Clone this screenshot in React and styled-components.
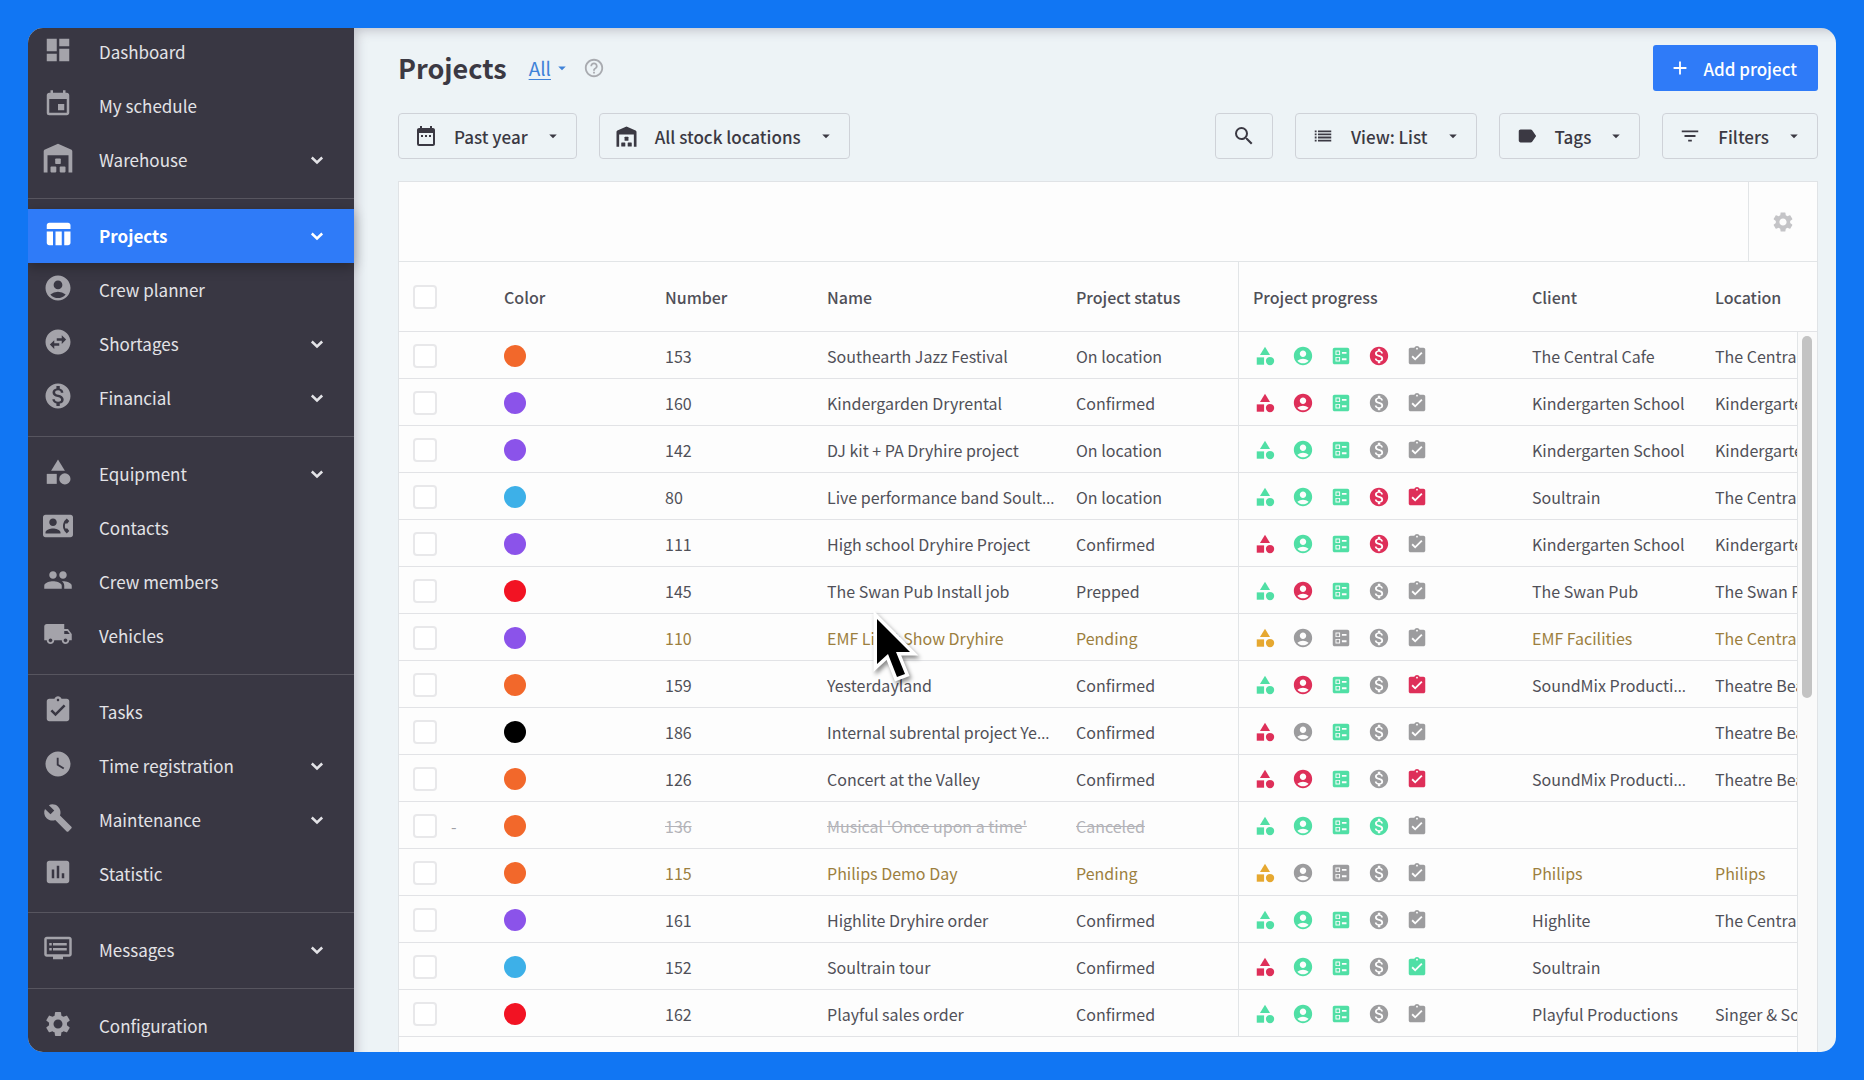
import React from 'react'
import styled, { createGlobalStyle } from 'styled-components'
import {
  MdAccountCircle,
  MdAdd,
  MdArrowDropDown,
  MdAssessment,
  MdAssignmentTurnedIn,
  MdBallot,
  MdBuild,
  MdCategory,
  MdContactPhone,
  MdDashboard,
  MdDateRange,
  MdDvr,
  MdEvent,
  MdFilterList,
  MdHelpOutline,
  MdLabel,
  MdLocalShipping,
  MdMonetizationOn,
  MdPeople,
  MdSearch,
  MdSettings,
  MdSwapHorizontalCircle,
  MdTableChart,
  MdWatchLater
} from 'react-icons/md'

const GlobalStyle = createGlobalStyle`
  * {
    box-sizing: border-box;
  }
  body {
    margin: 0;
    background: #1176f3;
    color: #505058;
    font-family: 'Noto Sans CJK SC', 'Open Sans', sans-serif;
    font-size: 16px;
    line-height: 24px;
  }
  button {
    font-family: inherit;
    cursor: pointer;
  }
`

const Page = styled.div`
  position: relative;
  height: 100vh;
  padding: 28px;
`

const Window = styled.div`
  display: flex;
  height: 100%;
  overflow: hidden;
  border-radius: 15px;
  background: #edf3f6;
`

const Sidebar = styled.nav`
  flex: 0 0 326px;
  background: #393743;
`

const NavGroup = styled.ul`
  list-style: none;
  margin: 0;
  padding: 0 0 11px;
  &:first-child {
    margin-top: -3px;
  }
  & + & {
    border-top: 1px solid #57555f;
    padding-top: 10px;
  }
`

const NavLink = styled.a`
  display: flex;
  align-items: center;
  height: 54px;
  padding: 0 25px 0 15px;
  text-decoration: none;
  font-size: 17px;
  font-weight: ${props => (props.$active ? 700 : 400)};
  color: ${props => (props.$active ? '#fff' : '#e3e3e7')};
  background: ${props => (props.$active ? '#2f7bf8' : 'none')};
  box-shadow: ${props => (props.$active ? '0 4px 12px rgba(0, 0, 0, 0.3)' : 'none')};
  > svg:first-child {
    width: 30px;
    height: 30px;
    margin: 0 26px 5px 0;
    color: ${props => (props.$active ? '#fff' : '#a4a3aa')};
  }
`

const NavLabel = styled.span`
  flex: 1;
`

const Main = styled.main`
  flex: 1;
  min-width: 0;
  display: flex;
  flex-direction: column;
  padding: 17px 18px 0 44px;
  box-shadow: inset 10px 10px 12px -8px rgba(90, 80, 100, 0.32);
`

const Bar = styled.div`
  display: flex;
  align-items: center;
  gap: 22px;
  margin-bottom: 22px;
`

const Title = styled.h1`
  margin: 0;
  font-size: 27px;
  line-height: 46px;
  font-weight: 700;
  color: #3b3943;
`

const Scope = styled.div`
  display: flex;
  align-items: center;
  gap: 12px;
`

const ScopeLink = styled.a`
  display: flex;
  align-items: center;
  gap: 2px;
  font-size: 19px;
  color: #3f82d8;
  text-decoration: none;
  span {
    text-decoration: underline;
    text-underline-offset: 3px;
  }
`

const HelpButton = styled.button`
  display: flex;
  padding: 0;
  border: 0;
  background: none;
  color: #a9abb0;
`

const Spacer = styled.div`
  flex: 1;
`

const AddButton = styled.button`
  display: flex;
  align-items: center;
  gap: 12px;
  height: 46px;
  padding: 0 21px 0 16px;
  border: 0;
  border-radius: 3px;
  background: #2f7bf8;
  color: #fff;
  font-size: 17px;
  font-weight: 500;
`

const ToolButton = styled.button`
  display: flex;
  align-items: center;
  gap: 16px;
  height: 46px;
  padding: 0 14px 0 15px;
  border: 1px solid #cfd2d8;
  border-radius: 4px;
  background: none;
  color: #3b3943;
  font-size: 17px;
  font-weight: 500;
`

const SearchButton = styled(ToolButton)`
  padding: 0 16px;
`

const ToolIcon = styled.span`
  display: flex;
  justify-content: center;
  width: 24px;
`

const Panel = styled.section`
  position: relative;
  flex: 1;
  min-height: 0;
  overflow: hidden;
  border: 1px solid #e0e3e6;
  border-bottom: 0;
  background: #fdfdfd;
`

const PanelTools = styled.div`
  display: flex;
  justify-content: flex-end;
  height: 80px;
  border-bottom: 1px solid #e2e5e7;
`

const SettingsButton = styled.button`
  width: 69px;
  display: grid;
  place-items: center;
  padding: 0;
  border: 0;
  border-left: 1px solid #e2e5e7;
  background: none;
  color: #c4c4c7;
`

const Table = styled.table`
  width: 100%;
  table-layout: fixed;
  border-collapse: separate;
  border-spacing: 0;
  text-align: left;
`

const Th = styled.th`
  width: ${props => props.$width || 'auto'};
  height: 70px;
  padding: 0 4px 0 14px;
  border-bottom: 1px solid #e2e3e6;
  border-left: ${props => (props.$split ? '1px solid #e2e5e7' : '0')};
  font-weight: 500;
  white-space: nowrap;
`

const tones = {
  pending: '#9c7f3e',
  canceled: '#b3b3b8'
}

const Td = styled.td`
  height: 47px;
  padding: 2px 4px 0 14px;
  border-bottom: 1px solid #e2e3e6;
  border-left: ${props => (props.$split ? '1px solid #e2e5e7' : '0')};
  overflow: hidden;
  white-space: nowrap;
  color: ${props => tones[props.$tone] || 'inherit'};
  text-decoration: ${props => (props.$tone === 'canceled' ? 'line-through' : 'none')};
`

// the CJK font centres its ellipsis, so take the glyph from another family
const Ellipsis = styled.span`
  font-family: 'Open Sans', sans-serif;
`

const CheckWrap = styled.div`
  display: flex;
  align-items: center;
  gap: 14px;
  color: #a0a0a6;
`

const Checkbox = styled.input`
  appearance: none;
  width: 24px;
  height: 24px;
  margin: 0;
  border: 2px solid #e8e8ea;
  border-radius: 4px;
  background: #fff;
`

const Dot = styled.span`
  display: block;
  width: 22px;
  height: 22px;
  border-radius: 50%;
  background: ${props => props.$color};
`

const Progress = styled.div`
  display: flex;
  gap: 16px;
  padding-left: 1px;
`

const marks = {
  g: '#50dfa5',
  r: '#de2f59',
  n: '#9c9c9e',
  y: '#e6a830'
}

const Mark = styled.span`
  display: flex;
  color: ${props => marks[props.$state]};
`

const ScrollTrack = styled.div`
  position: absolute;
  top: 150px;
  right: 0;
  bottom: 0;
  width: 20px;
  padding: 4px 5px 0 4px;
  border-left: 1px solid #e2e5e7;
  background: #fafafa;
`

const ScrollThumb = styled.div`
  width: 10px;
  height: 362px;
  border-radius: 5px;
  background: #c3c3c3;
`

const Pointer = styled.svg`
  position: absolute;
  left: 868px;
  top: 608px;
  filter: drop-shadow(2px 3px 2px rgba(0, 0, 0, 0.45));
`

const Chevron = () => (
  <svg width="24" height="24" viewBox="0 0 24 24" fill="none" stroke="currentColor" strokeWidth="2.5">
    <path d="M6.800 9.500 12 14.500l5.200-5" />
  </svg>
)

const WarehouseIcon = ({ size = 24 }) => (
  <svg width={size} height={size} viewBox="0 0 30 30" fill="currentColor">
    <path d="M15 .8 28 6.6c.8.4 1.3 1 1.3 1.9v21h-3.8V12.2H4.5v17.3H.7v-21c0-.9.5-1.5 1.3-1.9z" />
    <rect x="12.2" y="15.4" width="5.6" height="5.6" rx="0.8" />
    <rect x="7.5" y="23.6" width="5.8" height="5.8" rx="0.8" />
    <rect x="16.7" y="23.6" width="5.8" height="5.8" rx="0.8" />
  </svg>
)

const ListIcon = ({ size = 24 }) => (
  <svg width={size} height={size} viewBox="0 0 24 24" fill="currentColor">
    <path d="M3 6h2v2H3zM3 9.3h2v2H3zM3 12.6h2v2H3zM3 16h2v2H3zM6.5 6H21v2H6.5zM6.5 9.3H21v2H6.5zM6.5 12.6H21v2H6.5zM6.5 16H21v2H6.5z" />
  </svg>
)

const nav = [
  [
    { label: 'Dashboard', icon: MdDashboard },
    { label: 'My schedule', icon: MdEvent },
    { label: 'Warehouse', icon: WarehouseIcon, more: true }
  ],
  [
    { label: 'Projects', icon: MdTableChart, more: true, active: true },
    { label: 'Crew planner', icon: MdAccountCircle },
    { label: 'Shortages', icon: MdSwapHorizontalCircle, more: true },
    { label: 'Financial', icon: MdMonetizationOn, more: true }
  ],
  [
    { label: 'Equipment', icon: MdCategory, more: true },
    { label: 'Contacts', icon: MdContactPhone },
    { label: 'Crew members', icon: MdPeople },
    { label: 'Vehicles', icon: MdLocalShipping }
  ],
  [
    { label: 'Tasks', icon: MdAssignmentTurnedIn },
    { label: 'Time registration', icon: MdWatchLater, more: true },
    { label: 'Maintenance', icon: MdBuild, more: true },
    { label: 'Statistic', icon: MdAssessment }
  ],
  [{ label: 'Messages', icon: MdDvr, more: true }],
  [{ label: 'Configuration', icon: MdSettings }]
]

const progressIcons = [
  MdCategory,
  MdAccountCircle,
  MdBallot,
  MdMonetizationOn,
  MdAssignmentTurnedIn
]

const orange = '#f2682b'
const purple = '#8b53ea'
const sky = '#3db0e8'
const red = '#f21323'

// color, number, name, status, progress, client, location, tone
const rows = [
  [orange, 153, 'Southearth Jazz Festival', 'On location', 'gggrn', 'The Central Cafe', 'The Central'],
  [purple, 160, 'Kindergarden Dryrental', 'Confirmed', 'rrgnn', 'Kindergarten School', 'Kindergarten'],
  [purple, 142, 'DJ kit + PA Dryhire project', 'On location', 'gggnn', 'Kindergarten School', 'Kindergarten'],
  [sky, 80, 'Live performance band Soult…', 'On location', 'gggrr', 'Soultrain', 'The Central'],
  [purple, 111, 'High school Dryhire Project', 'Confirmed', 'rggrn', 'Kindergarten School', 'Kindergarten'],
  [red, 145, 'The Swan Pub Install job', 'Prepped', 'grgnn', 'The Swan Pub', 'The Swan P'],
  [purple, 110, 'EMF Light Show Dryhire', 'Pending', 'ynnnn', 'EMF Facilities', 'The Central', 'pending'],
  [orange, 159, 'Yesterdayland', 'Confirmed', 'grgnr', 'SoundMix Producti…', 'Theatre Bea'],
  ['#000', 186, 'Internal subrental project Ye…', 'Confirmed', 'rngnn', '', 'Theatre Bea'],
  [orange, 126, 'Concert at the Valley', 'Confirmed', 'rrgnr', 'SoundMix Producti…', 'Theatre Bea'],
  [orange, 136, "Musical 'Once upon a time'", 'Canceled', 'ggggn', '', '', 'canceled'],
  [orange, 115, 'Philips Demo Day', 'Pending', 'ynnnn', 'Philips', 'Philips', 'pending'],
  [purple, 161, 'Highlite Dryhire order', 'Confirmed', 'gggnn', 'Highlite', 'The Central'],
  [sky, 152, 'Soultrain tour', 'Confirmed', 'rggng', 'Soultrain', ''],
  [red, 162, 'Playful sales order', 'Confirmed', 'gggnn', 'Playful Productions', 'Singer & So']
]

const Tool = ({ icon: Icon, size = 24, children }) => (
  <ToolButton type="button">
    <ToolIcon>
      <Icon size={size} />
    </ToolIcon>
    <span>{children}</span>
    <MdArrowDropDown size={18} />
  </ToolButton>
)

const Text = ({ value }) =>
  value.endsWith('…') ? (
    <>
      {value.slice(0, -1)}
      <Ellipsis>…</Ellipsis>
    </>
  ) : (
    value
  )

const ProjectRow = ({ row }) => {
  const [color, number, name, status, progress, client, location, tone] = row
  return (
    <tr>
      <Td>
        <CheckWrap>
          <Checkbox type="checkbox" aria-label={`Select ${name}`} />
          {tone === 'canceled' && <span>-</span>}
        </CheckWrap>
      </Td>
      <Td>
        <Dot $color={color} />
      </Td>
      <Td $tone={tone}>{number}</Td>
      <Td $tone={tone}>
        <Text value={name} />
      </Td>
      <Td $tone={tone}>{status}</Td>
      <Td $split>
        <Progress>
          {progressIcons.map((Icon, i) => (
            <Mark key={i} $state={progress[i]}>
              <Icon size={22} />
            </Mark>
          ))}
        </Progress>
      </Td>
      <Td $tone={tone}>
        <Text value={client} />
      </Td>
      <Td $tone={tone}>{location}</Td>
    </tr>
  )
}

const App = () => (
  <Page>
    <GlobalStyle />
    <Window>
      <Sidebar>
        {nav.map((group, i) => (
          <NavGroup key={i}>
            {group.map(({ label, icon: Icon, more, active }) => (
              <li key={label}>
                <NavLink href="#" $active={active}>
                  <Icon />
                  <NavLabel>{label}</NavLabel>
                  {more && <Chevron />}
                </NavLink>
              </li>
            ))}
          </NavGroup>
        ))}
      </Sidebar>
      <Main>
        <Bar>
          <Title>Projects</Title>
          <Scope>
            <ScopeLink href="#">
              <span>All</span>
              <MdArrowDropDown size={18} />
            </ScopeLink>
            <HelpButton type="button" aria-label="Help">
              <MdHelpOutline size={22} />
            </HelpButton>
          </Scope>
          <Spacer />
          <AddButton type="button">
            <MdAdd size={22} />
            Add project
          </AddButton>
        </Bar>
        <Bar>
          <Tool icon={MdDateRange}>Past year</Tool>
          <Tool icon={WarehouseIcon} size={21}>
            All stock locations
          </Tool>
          <Spacer />
          <SearchButton type="button" aria-label="Search">
            <MdSearch size={24} />
          </SearchButton>
          <Tool icon={ListIcon} size={22}>
            View: List
          </Tool>
          <Tool icon={MdLabel} size={22}>
            Tags
          </Tool>
          <Tool icon={MdFilterList} size={22}>
            Filters
          </Tool>
        </Bar>
        <Panel>
          <PanelTools>
            <SettingsButton type="button" aria-label="Table settings">
              <MdSettings size={24} />
            </SettingsButton>
          </PanelTools>
          <Table>
            <thead>
              <tr>
                <Th $width="91px">
                  <CheckWrap>
                    <Checkbox type="checkbox" aria-label="Select all" />
                  </CheckWrap>
                </Th>
                <Th $width="161px">Color</Th>
                <Th $width="162px">Number</Th>
                <Th $width="249px">Name</Th>
                <Th $width="176px">Project status</Th>
                <Th $width="280px" $split>
                  Project progress
                </Th>
                <Th $width="183px">Client</Th>
                <Th>Location</Th>
              </tr>
            </thead>
            <tbody>
              {rows.map(row => (
                <ProjectRow key={row[1]} row={row} />
              ))}
            </tbody>
          </Table>
          <ScrollTrack>
            <ScrollThumb />
          </ScrollTrack>
        </Panel>
      </Main>
    </Window>
    <Pointer width="60" height="80" viewBox="0 0 60 80" aria-hidden="true">
      <path
        d="M9 11v45l11-10 9 23 8-3-9-22h14z"
        fill="#000"
        stroke="#fff"
        strokeWidth="7"
        paintOrder="stroke"
      />
    </Pointer>
  </Page>
)

export default App
